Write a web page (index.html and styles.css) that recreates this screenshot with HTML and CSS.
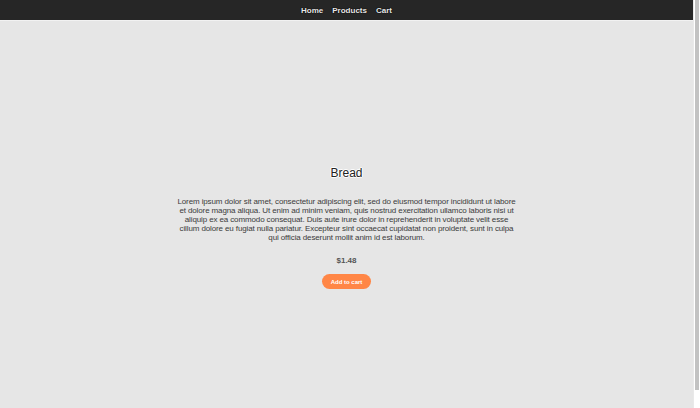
FILE: index.html
```html
<!DOCTYPE html>
<html lang="en">
<head>
<meta charset="utf-8">
<title>Bread</title>
<link rel="stylesheet" href="styles.css">
</head>
<body>
<div class="page">
  <nav class="nav">
    <a class="nav-link" href="#">Home</a>
    <a class="nav-link" href="#">Products</a>
    <a class="nav-link" href="#">Cart</a>
  </nav>
  <main class="product">
    <h1 class="title">Bread</h1>
    <p class="desc">Lorem ipsum dolor sit amet, consectetur adipiscing elit, sed do eiusmod tempor incididunt ut labore et dolore magna aliqua. Ut enim ad minim veniam, quis nostrud exercitation ullamco laboris nisi ut aliquip ex ea commodo consequat. Duis aute irure dolor in reprehenderit in voluptate velit esse cillum dolore eu fugiat nulla pariatur. Excepteur sint occaecat cupidatat non proident, sunt in culpa qui officia deserunt mollit anim id est laborum.</p>
    <div class="price">$1.48</div>
    <button class="cart-btn" type="button">Add to cart</button>
  </main>
</div>
<div class="scrollbar"><div class="thumb"></div></div>
</body>
</html>
```
FILE: styles.css
```css
html, body {
  margin: 0;
  padding: 0;
  height: 100%;
}
body {
  display: flex;
  font-family: "Liberation Sans", Arial, sans-serif;
  background: #e6e6e6;
  overflow: hidden;
}
.page {
  flex: 1;
  display: flex;
  flex-direction: column;
  min-width: 0;
}
.nav {
  height: 20px;
  background: #262626;
  border-bottom: 1px solid #f2f2f2;
  display: flex;
  justify-content: center;
  align-items: center;
  gap: 9px;
}
.nav-link {
  color: #e8e8e8;
  font-size: 8px;
  font-weight: bold;
  text-decoration: none;
  text-shadow: 0 0 1px #000, 0 0 1px #000;
}
.product {
  display: flex;
  flex-direction: column;
  align-items: center;
  padding-top: 145px;
}
.title {
  margin: 0;
  font-size: 12px;
  line-height: 14px;
  font-weight: normal;
  color: #222;
  text-shadow: 1px 0 0 #fff, -1px 0 0 #fff, 0 1px 0 #fff, 0 -1px 0 #fff;
}
.desc {
  margin: 17px 0 0;
  width: 340px;
  font-size: 8px;
  letter-spacing: -0.12px;
  line-height: 9px;
  text-align: center;
  color: #3b3b3b;
}
.price {
  margin-top: 14px;
  font-size: 8px;
  line-height: 10px;
  font-weight: bold;
  color: #555;
}
.cart-btn {
  margin-top: 8px;
  height: 15px;
  padding: 0 9px;
  border: none;
  border-radius: 8px;
  background: #ff8646;
  color: #fff;
  font-family: "Liberation Sans", Arial, sans-serif;
  font-size: 6px;
  font-weight: bold;
}
.scrollbar {
  width: 7px;
  flex: none;
  background: #ffffff;
  border-left: 1px solid #e9e9e9;
  box-sizing: border-box;
}
.thumb {
  margin-left: 1px;
  width: 4px;
  height: 390px;
  background: #c2c2c2;
}
```
